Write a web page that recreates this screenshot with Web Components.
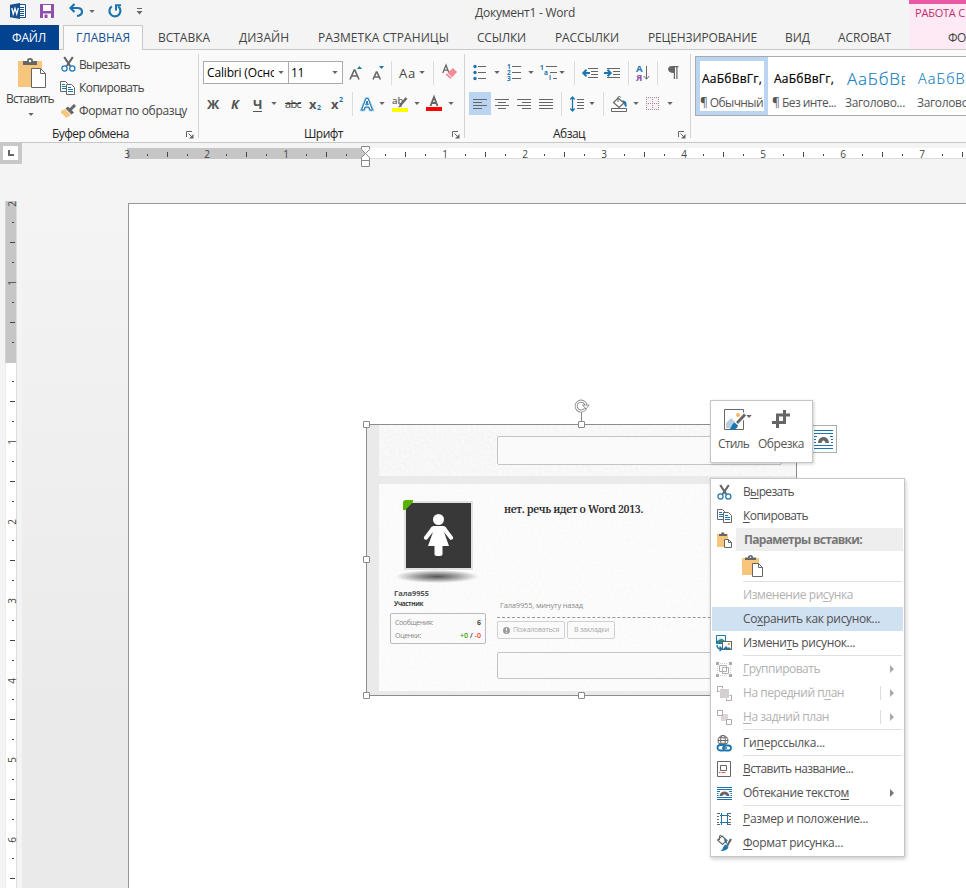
<!DOCTYPE html>
<html lang="ru">
<head>
<meta charset="utf-8">
<title>Документ1 - Word</title>
<style>
html,body{margin:0;padding:0}
body{width:966px;height:888px;overflow:hidden;font:12px/16px "Open Sans","Noto Sans",sans-serif;color:#444;background:#f4f4f4}
</style>
</head>
<body>
<word-window></word-window>
<script>
const define = (name, html, init) => customElements.define(name, class extends HTMLElement {
  constructor() {
    super();
    const t = document.createElement('template');
    t.innerHTML = html;
    this.attachShadow({mode: 'open'}).append(t.content.cloneNode(true));
  }
  connectedCallback() { if (init) init.call(this, this.shadowRoot); }
});

const G = '#666', B = '#1b75ae';
const lines = (x, ws, y, s, c = G) => ws.map((w, i) => `<path d="M${x[i] ?? x[0]} ${y + i * s}h${w}" stroke="${c}"/>`).join('');
const picMini = (x, y) => `<rect x="${x}.5" y="${y}.5" width="9" height="8" fill="#fff" stroke="${G}"/><path d="M${x+1} ${y+8}l3-3 2 2 1-1 2 2z" fill="${B}"/><rect x="${x+6}" y="${y+2}" width="2" height="2" fill="#f0a848"/>`;
const ICONS = {
  word: [16,16,`<path d="M9 1.500h6.500v13H9" fill="#fff" stroke="#17508f"/><path d="M10 4.500h4M10 6.500h4M10 8.500h4M10 10.500h4M10 12.500h4" stroke="#17508f"/><path d="M0 1.800L10 0v16L0 14.200z" fill="#17508f"/><path d="M1.800 5l1.400 6L5 5.400 6.700 11 8.300 5" fill="none" stroke="#fff" stroke-width="1.300"/>`],
  save: [14,14,`<path d="M0 0h14v14H0z" fill="#8f4fae"/><path d="M3 1h8v6H3z" fill="#fff"/><path d="M3 9.500h8V14H3z" fill="#fff"/><path d="M4.500 10.500h3V14h-3z" fill="#8f4fae"/>`],
  undo: [15,13,`<path d="M2 4h6.500c3 0 4.500 1.500 4.500 3.700S11.300 11.500 8 12" fill="none" stroke="${B}" stroke-width="2.200"/><path d="M5.500 0L1.500 4l4 4" fill="none" stroke="${B}" stroke-width="2.200"/>`],
  redo: [14,14,`<path d="M3.800 2.300A5.500 5.500 0 1 0 10.300 2.500" fill="none" stroke="${B}" stroke-width="2.200"/><path d="M8 6.500V1.200h5" fill="none" stroke="${B}" stroke-width="2"/>`],
  qat: [7,7,`<path d="M1 .5h5" stroke="${G}"/><path d="M.5 3h6l-3 3.500z" fill="${G}"/>`],
  arr: [6,3,`<path d="M.3 0h5.400L3 3z" fill="${G}"/>`],
  right: [4,8,`<path d="M0 0v8l4-4z" fill="currentColor"/>`],
  launch: [8,8,`<path d="M.5 6V.5H6" fill="none" stroke="${G}"/><path d="M2.500 2.500L6 6" stroke="${G}"/><path d="M7.500 3v4.500H3z" fill="${G}"/>`],
  paste: [28,31,`<path d="M0 3h24v26H0z" fill="#f8c57c"/><path d="M5 7V3h4a3 3 0 0 1 6 0h4v4z" fill="${G}"/><circle cx="12" cy="3" r="1.200" fill="#fff"/><path d="M13.500 10.500h9l5 5v14h-14z" fill="#fff" stroke="${G}"/><path d="M22.500 10.500v5h5" fill="none" stroke="${G}"/>`],
  pasteS: [21,22,`<path d="M0 3h17v17H0z" fill="#f8c57c"/><path d="M3 5V2.500h3a2.500 2.500 0 0 1 5 0h3V5z" fill="${G}"/><circle cx="8.500" cy="2.200" r=".8" fill="#fff"/><path d="M10.500 8.500h6l4 4v9h-10z" fill="#fff" stroke="${G}"/><path d="M16.500 8.500v4h4" fill="none" stroke="${G}"/>`],
  pasteXS: [15,16,`<path d="M0 2h11v13H0z" fill="#f8c57c"/><path d="M2 4V2h2a1.500 1.500 0 0 1 3.500 0H10v2z" fill="${G}"/><path d="M7.500 7.500h4l3 3v5h-7z" fill="#fff" stroke="${G}"/><path d="M11.500 7.500v3h3" fill="none" stroke="${G}"/>`],
  cut: [15,15,`<path d="M3.200 0l6 9M11.800 0L5.800 9" stroke="${G}" stroke-width="2.200"/><circle cx="3.500" cy="11.500" r="2.600" fill="none" stroke="${B}" stroke-width="1.200"/><circle cx="11.300" cy="11.500" r="2.600" fill="none" stroke="${B}" stroke-width="1.200"/>`],
  copy: [15,14,`<path d="M.5.5h5l2 2v8H.5z" fill="#fff" stroke="${G}"/><path d="M2 3.500h3M2 5.500h4M2 7.500h4" stroke="${B}"/><path d="M6.500 3.500h5l3 3v7h-8z" fill="#fff" stroke="${G}"/><path d="M8 6.500h3M8 8.500h5M8 10.500h5" stroke="${B}"/>`],
  brush: [15,14,`<path d="M0 7l4-2 6 6-5 3c-1-2-3-4-5-5z" fill="#f8c57c"/><path d="M4.500 4.500L7 2.500l6 6-2.500 2z" fill="${G}"/><path d="M9.500 5.500L14 1" stroke="${G}" stroke-width="3"/>`],
  growA: [15,14,`<path d="M1 13.500L5.200 4h.6L10 13.500M2.800 10h5.400" fill="none" stroke="${G}" stroke-width="1.600"/><path d="M8 3l2.500-3L13 3z" fill="${B}"/>`],
  shrinkA: [15,14,`<path d="M1 13.500L4.400 6h.5l3.500 7.500M2.300 11h4.600" fill="none" stroke="${G}" stroke-width="1.600"/><path d="M7 0h5L9.500 3z" fill="${B}"/>`],
  eraser: [16,15,`<path d="M.8 8L4 0l3 8M2 5.200h4" fill="none" stroke="${G}" stroke-width="1.300"/><path d="M11 3l4 4-6.500 7-5-4.500z" fill="#f58a97"/><path d="M5 8l5 4.500" stroke="#fff" />`],
  effA: [14,14,`<path d="M1.500 13L6 1.500h2L12.500 13H10L9 10H5l-1 3zM5.700 7.800h2.600L7 4z" fill="#fff" stroke="#8fc4ea" stroke-width="2.600"/><path d="M1.500 13L6 1.500h2L12.500 13H10L9 10H5l-1 3zM5.700 7.800h2.600L7 4z" fill="#fff" stroke="${B}"/>`],
  high: [17,16,`<path d="M0 12h16v4H0z" fill="#ff0"/><text x="0" y="7.500" font-size="9.500" font-weight="600" fill="${G}">ab</text><path d="M14.500 2L8 9.500" stroke="${G}" stroke-width="2.500"/><path d="M8.500 8L6 11.500l4-1z" fill="${G}"/>`],
  colA: [16,15,`<path d="M0 11h16v4H0z" fill="#f00"/><path d="M4.500 10L8 1l3.500 9M5.700 7h4.600" fill="none" stroke="${G}" stroke-width="1.900"/>`],
  bul: [14,16,[2,8,14].map(y=>`<circle cx="2" cy="${y-.5}" r="1.700" fill="${B}"/><path d="M5 ${y-.5}h8" stroke="${G}"/>`).join('')],
  num: [15,17,[2,8,14].map((y,i)=>`<text x="0" y="${y+3}" font-size="6.500" font-weight="700" fill="${B}">${i+1}</text><path d="M5 ${y+.5}h9" stroke="${G}"/>`).join('')],
  multi: [18,17,`<text x="0" y="5.500" font-size="6.500" font-weight="700" fill="${B}">1</text><text x="4" y="10.500" font-size="6.500" font-weight="700" fill="${B}">a</text><text x="9" y="16" font-size="6.500" font-weight="700" fill="${B}">i</text><path d="M6 2.500h11M10 8.500h7M13 14.500h4" stroke="${G}"/>`],
  outd: [16,12,`<path d="M6 1.500h10M9 4.500h7M9 7.500h7M6 10.500h10" stroke="${G}"/><path d="M8 6H2M4.500 2.800L1.300 6l3.200 3.200" fill="none" stroke="${B}" stroke-width="2"/>`],
  ind: [16,12,`<path d="M3 1.500h13M9 4.500h7M9 7.500h7M3 10.500h13" stroke="${G}"/><path d="M0 6h6M3.500 2.800L6.700 6 3.500 9.200" fill="none" stroke="${B}" stroke-width="2"/>`],
  sort: [15,16,`<text x="0" y="7" font-size="9.500" font-weight="700" fill="${B}">А</text><text x="0" y="15.500" font-size="9.500" font-weight="700" fill="#8f4fae">Я</text><path d="M10.500 1v13M7.700 11l2.800 3.200 2.800-3.200" fill="none" stroke="${G}"/>`],
  pil: [12,13,`<path d="M4 0h6.500v1.200H9.500V13H8.300V1.200H7V13H5.800V7C-1.500 7-1.500 0 4 0z" fill="${G}"/>`],
  al: [14,10,lines([0],[14,9,14,9],.5,3)], ac: [14,10,lines([0,3,0,3],[14,8,14,8],.5,3)],
  ar: [14,10,lines([0,5,0,5],[14,9,14,9],.5,3)], aj: [14,10,lines([0],[14,14,14,14],.5,3)],
  space: [15,16,`<path d="M2.500 1v14M.3 3.500L2.500 1l2.200 2.500M.3 12.500L2.500 15l2.200-2.500" fill="none" stroke="${B}" stroke-width="1.300"/>`+lines([7],[7,7,7,7],3.500,3)],
  fill: [17,16,`<path d="M.5 12.500h15v3H.5z" fill="#fff" stroke="${G}"/><path d="M7 2l6 5-5 4.500-5.500-5z" fill="#fff" stroke="${G}" stroke-width="1.200"/><path d="M7 6V1.500c0-1.500 2.500-1.500 2.500 0" fill="none" stroke="${G}"/><path d="M11 4.500c4 0 5 2 4.500 6.500C14 11 13 9 13 7z" fill="${B}"/>`],
  bord: [13,13,`<path d="M0 0h13v13H0z" fill="#f8f1f6"/><path d="M0 .5h13M0 6.500h13M0 12.500h13M.5 0v13M6.500 0v13M12.500 0v13" fill="none" stroke="#a58c9b" stroke-dasharray="1 1"/>`],
  style: [22,22,`<path d="M.5.5h19v20H.5z" fill="#fff" stroke="${G}"/><path d="M2 19v-5l5-5 5 5v5z" fill="#b8cede"/><circle cx="14" cy="6" r="2" fill="#f3b95f"/><path d="M21.500 5L12 16" stroke="#fff" stroke-width="5"/><path d="M21 5.500L13 14" stroke="${G}" stroke-width="2.800"/><path d="M10.500 13.500l3.500 3c-1 4-5 5-9.500 4.500 3-1.500 3-6 6-7.500z" fill="${B}"/>`],
  crop: [18,18,`<path d="M12.500 0v12.500H7M5.500 18V5H12M0 12.500h13M18 5H5" fill="none" stroke="${G}" stroke-width="3"/>`],
  wrap: [19,19,`<path d="M0 .5h19M0 3.500h19M0 15.500h19M0 18.500h19" stroke="${B}"/><path d="M0 6.500h3M0 9.500h2M0 12.500h2M16 6.500h3M17 9.500h2M17 12.500h2" stroke="${B}"/><path d="M4 13c.5-8 10.500-8 11 0h-3.500c-.5-3.500-3.500-3.500-4 0z" fill="${G}"/>`],
  wrapS: [15,13,`<path d="M0 .5h15M0 2.500h15M0 10.500h15M0 12.500h15" stroke="${B}"/><path d="M0 4.500h3M12 4.500h3M0 6.500h1.500M13.500 6.500H15M0 8.500h1.500M13.500 8.500H15" stroke="${B}"/><path d="M2.500 9c.5-6 9.500-6 10 0H9.500c-.5-2-3.500-2-4 0z" fill="${G}"/>`],
  change: [16,16,`<path d="M.5.500h9v8h-9z" fill="#fff" stroke="${B}"/><path d="M1 8V5l3-3 5 4v2z" fill="#2f887d"/><path d="M1 1h8v2L5 4 1 6z" fill="#fff" opacity=".8"/>${picMini(6,6)}<path d="M1 10c0 3 1.500 4 4 4M3.500 11.500L6 14l-2.500 2" fill="none" stroke="${B}" stroke-width="1.500"/>`],
  group: [16,15,`<path d="M3.500 3.500h7v6h-7zM6.500 5.500h6v6h-6z" fill="none" stroke="#b3abb0"/><path d="M1.500 4v7M14.500 4v7M4 1.500h8M4 13.500h8" stroke="#ccc" stroke-dasharray="1 1"/><path d="M0 0h3v3H0zM13 0h3v3h-3zM0 12h3v3H0zM13 12h3v3h-3z" fill="#aaa"/>`],
  front: [15,15,`<path d="M.5 6V.5H6M14.500 9v5.500H9" fill="none" stroke="#b3abb0"/><path d="M3 3h9v9H3z" fill="#d5ced3"/><path d="M.5 5.500h2M5.500 .5v2M9.500 12.500v2M12.500 9.500h2" stroke="#b3abb0"/>`],
  back: [15,15,`<path d="M4 4h7v7H4z" fill="#ddd6db"/><path d="M.5.5h5v5h-5zM9.500 9.500h5v5h-5z" fill="#fff" stroke="#aaa"/>`],
  link: [16,17,`<circle cx="7" cy="5.500" r="5" fill="#fff" stroke="${G}"/><path d="M2 5.500h10M3 2.800h8M3 8.300h8" stroke="${G}" fill="none"/><ellipse cx="7" cy="5.500" rx="2.300" ry="5" fill="none" stroke="${G}"/><rect x="1.500" y="10" width="8" height="5.500" rx="2.700" fill="#fff" stroke="${B}" stroke-width="1.800"/><rect x="7.500" y="10.500" width="7.500" height="5" rx="2.500" fill="#fff" stroke="${B}" stroke-width="1.800"/><path d="M6 13h5" stroke="${B}" stroke-width="1.500"/>`],
  cap: [14,16,`<path d="M.5.5h13v15H.5z" fill="#fff" stroke="${G}"/><path d="M3.500 4.500h6v5h-6z" fill="none" stroke="${G}"/><path d="M2 11.500h1.500M4.500 11.500h4" stroke="#e0533c"/>`],
  size: [14,12,`<path d="M0 .5h3M0 3.500h2M0 6.500h2M0 9.500h2M11 .5h3M12 3.500h2M12 6.500h2M12 9.500h2M0 11.500h3M11 11.500h3" stroke="${G}"/><path d="M4.500 0v12M10.500 0v12M3 2.500h9M3 9.500h9" fill="none" stroke="${B}"/>`],
  format: [17,16,`<path d="M6 1l5 4.500L6.500 9.500 1.500 5z" fill="#fff" stroke="${G}" stroke-width="1.200"/><path d="M3.500 5V1c0-1 2-1 2 0" fill="none" stroke="${G}"/><path d="M8 4c2 0 3 2 3 5-2-1-2.500-3-3-5z" fill="${B}"/><path d="M15 4l-4 7" stroke="${G}" stroke-width="2.200"/><path d="M9.500 9.500l3 2.500c-1 3-4 4-8 4 3-1.500 2.500-5.500 5-6.500z" fill="${B}"/>`],
  rotate: [16,16,`<path d="M11.500 9.500A5 5 0 1 1 12 6" fill="none" stroke="#888" stroke-width="3"/><path d="M11.500 9.500A5 5 0 1 1 12 6" fill="none" stroke="#fff" stroke-width="1.300"/><path d="M8.500 6h6.500l-3 4z" fill="#fff" stroke="#888" stroke-width=".9"/>`],
  woman: [31,43,`<circle cx="15.500" cy="5.500" r="5.500" fill="#fff"/><path d="M11 12h9c2 0 3 1 4 3l6 8c1 2-2 4-3.500 2L21 18l5 14h-6.500v8.500c0 2-8 2-8 0V32H5l5-14-5.500 7C3 27 0 25 1 23l6-8c1-2 2-3 4-3z" fill="#fff"/>`],
  info: [7,7,`<circle cx="3.500" cy="3.500" r="3.500" fill="#999"/><path d="M3.500 1.300v2.500M3.500 4.700v1" stroke="#fff" stroke-width="1.200"/>`]
};

define('ui-icon', `<style>:host{display:block;flex:none}svg{display:block;overflow:visible;font-family:"Open Sans",sans-serif}</style><span></span>`, function(r) {
  const [w, h, b] = ICONS[this.getAttribute('name')];
  r.querySelector('span').innerHTML = `<svg width="${w}" height="${h}" viewBox="0 0 ${w} ${h}">${b}</svg>`;
});

/* Label whose letter spacing is adjusted so that its text spans the width in "w". */
define('ui-label', `<style>:host{display:block;flex:none;white-space:nowrap}span{display:inline-block;white-space:nowrap;text-decoration:var(--deco,none);text-underline-offset:2px}</style><span><slot></slot></span>`, function(r) {
  const w = +this.getAttribute('w');
  if (!w) return;
  const s = r.querySelector('span');
  this.style.width = w + 'px';
  s.style.letterSpacing = (w - s.getBoundingClientRect().width) / this.textContent.length + 'px';
});

define('ui-sep', `<style>:host{display:block;flex:none;width:1px;height:24px;background:#dcdcdc}</style>`);

define('title-bar', `<style>
:host{display:flex;height:25px;background:#f4f4f4;align-items:flex-start}
.ctx{margin-left:auto;width:57px;box-sizing:border-box;height:25px;background:#fdeaf4;border-top:4px solid #e85aa3;color:#c0306f;padding:1px 0 0 6px}
</style>
<ui-icon name="word" style="margin:3px 0 0 10px"></ui-icon>
<ui-icon name="save" style="margin:4px 0 0 14px"></ui-icon>
<ui-icon name="undo" style="margin:4px 0 0 15px"></ui-icon>
<ui-icon name="arr" style="margin:10px 0 0 5px"></ui-icon>
<ui-icon name="redo" style="margin:4px 0 0 13px"></ui-icon>
<ui-icon name="qat" style="margin:8px 0 0 14px"></ui-icon>
<ui-label w="100" style="margin:5px 0 0 332px">Документ1 - Word</ui-label>
<div class="ctx"><ui-label w="50" style="font-size:11px">РАБОТА С</ui-label></div>`);

define('tab-strip', `<style>
:host{display:flex;height:25px;background:#f4f4f4;box-shadow:inset 0 -1px #c8c8c8;font-size:12px;line-height:25px}
.file{width:47px;padding-left:12px;background:#01438e;color:#fff}
.on{margin-left:4px;box-sizing:border-box;width:80px;padding-left:12px;background:#fafafa;border:1px solid #c8c8c8;border-bottom:0;color:#17508f;line-height:24px}
.ctx{margin-left:auto;width:57px;box-sizing:border-box;padding-left:39px;background:#fdeaf4;height:24px}
</style>
<div class="file"><ui-label w="34">ФАЙЛ</ui-label></div>
<div class="on"><ui-label w="54">ГЛАВНАЯ</ui-label></div>
<ui-label w="52" style="margin-left:15px">ВСТАВКА</ui-label>
<ui-label w="50" style="margin-left:29px">ДИЗАЙН</ui-label>
<ui-label w="131" style="margin-left:29px">РАЗМЕТКА СТРАНИЦЫ</ui-label>
<ui-label w="49" style="margin-left:28px">ССЫЛКИ</ui-label>
<ui-label w="64" style="margin-left:29px">РАССЫЛКИ</ui-label>
<ui-label w="109" style="margin-left:29px">РЕЦЕНЗИРОВАНИЕ</ui-label>
<ui-label w="25" style="margin-left:28px">ВИД</ui-label>
<ui-label w="53" style="margin-left:28px">ACROBAT</ui-label>
<div class="ctx"><ui-label w="18">ФО</ui-label></div>`);

define('ribbon-group', `<style>
:host{display:flex;flex-direction:column;flex:none;box-sizing:border-box;height:92px}
:host([bar]){background:linear-gradient(#d4d4d4,#d4d4d4) no-repeat right 4px/1px 84px}
.body{height:76px}.cap{height:16px;display:flex;color:#262626}
</style><div class="body"><slot></slot></div><div class="cap"><slot name="cap"></slot></div>`);

define('word-ribbon', `<style>
:host{display:flex;height:92px;background:#fafafa;border-bottom:1px solid #c8c8c8;overflow:hidden}
.r{display:flex;align-items:center}
.combo{display:flex;align-items:center;box-sizing:border-box;height:23px;border:1px solid #ababab;background:#fff;color:#000}
.clip{overflow:hidden}
.big{width:60px;padding-top:8px}
.t{color:#555;font-weight:700;font-size:13px}
.n2{font-size:7px;color:#1b75ae;font-weight:700}
.sel{width:22px;height:23px;background:#bad5f1;display:grid;place-content:center}
.gal{display:flex;width:290px;height:58px;margin:6px 0 0 4px;border:1px solid #ababab;background:#fff}
.c{width:72px;box-sizing:border-box;height:58px;padding:4px 4px 0;color:#000;flex:none}
.c.on{border:4px solid #bad5f1;padding:0}
.s{width:60px;padding:9px 0 0 2px;overflow:hidden;height:25px;line-height:18px;-webkit-text-stroke:.2px}
.s.h{color:#0f7cc0;font-weight:300;-webkit-text-stroke:.15px}
.n{color:#555;overflow:hidden;line-height:16px}
</style>
<ribbon-group bar style="width:199px">
 <div style="display:flex">
  <div class="big"><ui-icon name="paste" style="margin-left:18px"></ui-icon><ui-label w="48" style="margin:2px 0 0 6px">Вставить</ui-label><ui-icon name="arr" style="margin:6px 0 0 28px"></ui-icon></div>
  <div>
   <div class="r" style="height:23px;margin-top:3px"><ui-icon name="cut" style="margin-left:1px"></ui-icon><ui-label w="51" style="margin-left:3px">Вырезать</ui-label></div>
   <div class="r" style="height:23px"><ui-icon name="copy"></ui-icon><ui-label w="65" style="margin-left:4px">Копировать</ui-label></div>
   <div class="r" style="height:23px"><ui-icon name="brush" style="margin-left:1px"></ui-icon><ui-label w="108" style="margin-left:3px">Формат по образцу</ui-label></div>
  </div>
 </div>
 <ui-label slot="cap" w="77" style="margin-left:52px">Буфер обмена</ui-label><ui-icon slot="cap" name="launch" style="margin:5px 0 0 57px"></ui-icon>
</ribbon-group>
<ribbon-group bar style="width:266px">
 <div class="r" style="padding:11px 0 0 4px;height:23px">
  <div class="combo" style="width:86px"><div class="clip" style="width:67px;padding-left:3px"><ui-label w="70">Calibri (Осно</ui-label></div><ui-icon name="arr" style="margin-left:4px"></ui-icon></div>
  <div class="combo" style="width:55px;margin-left:-1px"><ui-label w="13" style="margin-left:2px">11</ui-label><ui-icon name="arr" style="margin-left:28px"></ui-icon></div>
  <ui-icon name="growA" style="margin-left:6px"></ui-icon><ui-icon name="shrinkA" style="margin-left:8px"></ui-icon>
  <ui-sep style="margin-left:4px"></ui-sep><ui-label w="17" style="margin-left:7px;font-size:13px">Aa</ui-label><ui-icon name="arr" style="margin-left:3px"></ui-icon>
  <ui-sep style="margin-left:8px"></ui-sep><ui-icon name="eraser" style="margin-left:8px"></ui-icon>
 </div>
 <div class="r" style="padding:8px 0 0 8px;height:23px">
  <ui-label class="t" w="13">Ж</ui-label><ui-label class="t" w="9" style="margin-left:11px;font-style:italic">К</ui-label><ui-label class="t" w="9" style="margin-left:13px;--deco:underline">Ч</ui-label><ui-icon name="arr" style="margin-left:9px"></ui-icon>
  <ui-label w="16" style="margin-left:8px;font-size:11px;--deco:line-through">abc</ui-label>
  <ui-label class="t" w="8" style="margin-left:8px">x</ui-label><span class="n2" style="padding-top:9px">2</span>
  <ui-label class="t" w="8" style="margin-left:10px">x</ui-label><span class="n2" style="padding-bottom:8px">2</span>
  <ui-sep style="margin-left:9px"></ui-sep><ui-icon name="effA" style="margin-left:7px"></ui-icon><ui-icon name="arr" style="margin-left:5px"></ui-icon>
  <ui-icon name="high" style="margin-left:7px"></ui-icon><ui-icon name="arr" style="margin-left:5px"></ui-icon>
  <ui-icon name="colA" style="margin-left:6px"></ui-icon><ui-icon name="arr" style="margin-left:6px"></ui-icon>
 </div>
 <ui-label slot="cap" w="39" style="margin-left:105px">Шрифт</ui-label><ui-icon slot="cap" name="launch" style="margin:5px 0 0 109px"></ui-icon>
</ribbon-group>
<ribbon-group bar style="width:226px">
 <div class="r" style="padding:11px 0 0 8px;height:23px">
  <ui-icon name="bul"></ui-icon><ui-icon name="arr" style="margin-left:7px"></ui-icon>
  <ui-icon name="num" style="margin-left:7px"></ui-icon><ui-icon name="arr" style="margin-left:6px"></ui-icon>
  <ui-icon name="multi" style="margin-left:6px"></ui-icon><ui-icon name="arr" style="margin-left:1px"></ui-icon>
  <ui-sep style="margin-left:9px"></ui-sep><ui-icon name="outd" style="margin-left:7px"></ui-icon><ui-icon name="ind" style="margin-left:6px"></ui-icon>
  <ui-sep style="margin-left:8px"></ui-sep><ui-icon name="sort" style="margin-left:7px"></ui-icon>
  <ui-sep style="margin-left:6px"></ui-sep><ui-icon name="pil" style="margin-left:10px"></ui-icon>
 </div>
 <div class="r" style="padding:8px 0 0 4px;height:23px">
  <div class="sel"><ui-icon name="al"></ui-icon></div><ui-icon name="ac" style="margin-left:4px"></ui-icon><ui-icon name="ar" style="margin-left:8px"></ui-icon><ui-icon name="aj" style="margin-left:8px"></ui-icon>
  <ui-sep style="margin-left:8px"></ui-sep><ui-icon name="space" style="margin-left:8px"></ui-icon><ui-icon name="arr" style="margin-left:4px"></ui-icon>
  <ui-sep style="margin-left:8px"></ui-sep><ui-icon name="fill" style="margin-left:7px"></ui-icon><ui-icon name="arr" style="margin-left:5px"></ui-icon>
  <ui-icon name="bord" style="margin-left:7px"></ui-icon><ui-icon name="arr" style="margin-left:8px"></ui-icon>
 </div>
 <ui-label slot="cap" w="32" style="margin-left:88px">Абзац</ui-label><ui-icon slot="cap" name="launch" style="margin:5px 0 0 93px"></ui-icon>
</ribbon-group>
<div class="gal">
 <div class="c on"><div class="s"><ui-label w="60">АаБбВвГг,</ui-label></div><div class="n"><ui-label w="63">¶ Обычный</ui-label></div></div>
 <div class="c"><div class="s"><ui-label w="60">АаБбВвГг,</ui-label></div><div class="n"><ui-label w="64">¶ Без инте...</ui-label></div></div>
 <div class="c"><div class="s h" style="font-size:17px;width:58px;padding-left:3px"><ui-label w="64">АаБбВв</ui-label></div><div class="n" style="padding-left:1px"><ui-label w="60">Заголово...</ui-label></div></div>
 <div class="c"><div class="s h" style="font-size:14.5px;padding-left:2px"><ui-label w="57">АаБбВв</ui-label></div><div class="n" style="padding-left:1px"><ui-label w="60">Заголово...</ui-label></div></div>
</div>`);

define('word-ruler', `<style>:host{display:block;flex:none}svg{display:block;font:10px "Open Sans",sans-serif;fill:#444}</style><div></div>`, function(r) {
  const v = this.hasAttribute('vertical'), len = v ? 690 : 840;
  const zero = v ? 161.5 : 238.5, lo = v ? -2 : -3, hi = v ? 7 : 8, step = 79.5;
  let s = '';
  for (let q = lo * 4; q <= hi * 4; q++) {
    const p = Math.round(zero + q * step / 4);
    if (q === 0 || p > len) continue;
    if (q % 4 === 0) s += v ? `<text transform="translate(10.500 ${p}) rotate(-90)" text-anchor="middle">${Math.abs(q / 4)}</text>` : `<text x="${p}" y="9.500" text-anchor="middle">${Math.abs(q / 4)}</text>`;
    else {
      const d = q % 2 === 0 ? 5 : 2, o = q % 2 === 0 ? 4 : 6;
      s += v ? `<rect x="${o + 1}" y="${p - 1}" width="${d}" height="1"/>` : `<rect x="${p}" y="${o}" width="1" height="${d}"/>`;
    }
  }
  r.querySelector('div').innerHTML = v
    ? `<svg width="12" height="${len}"><rect width="12" height="${len}" fill="#fff"/><rect width="12" height="162" fill="#c6c6c6"/><path d="M0 0v${len}M11.500 0v${len}" stroke="#ddd"/>${s}</svg>`
    : `<svg width="${len}" height="20" style="overflow:visible"><rect width="${len}" height="11" fill="#fff"/><rect width="239" height="11" fill="#c6c6c6"/><path d="M239 10.500h601" stroke="#ddd"/>${s}
       <path d="M234.500-1.500h8v3l-4 4 4 4v3h-8v-3l4-4-4-4zM234.500 12.500h8v6h-8z" fill="#fff" stroke="#888"/></svg>`;
});

define('forum-shot', `<style>
:host{display:block;box-sizing:border-box;width:431px;height:272px;border:1px solid #8c8c8c;background:#eaeaea;overflow:hidden;padding-left:12px;font-family:"Open Sans",sans-serif;font-size:8px;line-height:10px}
.p{position:relative;background:#f9f9f9}
.tex{position:absolute;inset:0;width:100%;height:100%;opacity:.4}
.in{position:relative}
.box{box-sizing:border-box;width:285px;border:1px solid #c4c4c4;border-radius:2px;background:#fafafa}
.post{display:grid;grid-template-columns:118px 1fr}
.av{width:65px;height:65px;border:2px solid #e2e2e2;background:#383838;margin:17px 0 0 25px;display:grid;place-content:center;position:relative}
.av::before{content:"";position:absolute;left:-3px;top:-3px;width:10px;height:10px;border-radius:3px 0 0 0;background:#57b300;clip-path:polygon(0 0,100% 0,100% 20%,25% 100%,0 100%)}
.sh{width:84px;height:13px;margin:0 0 0 16px;background:radial-gradient(closest-side,#555,#999 45%,transparent)}
.st{box-sizing:border-box;width:96px;height:31px;border:1px solid #bbb;border-radius:2px;background:#fafafa;margin:4px 0 0 11px;padding:4px 4px 0;font-size:7px;color:#888}
.l{display:flex;justify-content:space-between;height:13px}
.b{box-sizing:border-box;height:18px;border:1px solid #d0d0d0;border-radius:2px;display:flex;align-items:center;color:#aaa;font-size:7px;background:#fafafa}
</style>
<div class="p" style="height:51px"><svg class="tex"><filter id="n"><feTurbulence type="fractalNoise" baseFrequency=".35" numOctaves="2"/><feColorMatrix values="0 0 0 0 .5 0 0 0 0 .5 0 0 0 0 .5 .5 0 0 0 -.18"/></filter><rect width="100%" height="100%" filter="url(#n)"/></svg>
<div class="in" style="padding:11px 0 0 118px"><div class="box" style="height:29px"></div></div></div>
<div class="p" style="height:207px;margin-top:8px;background:#fcfcfc"><svg class="tex" style="opacity:.22"><filter id="n2"><feTurbulence type="fractalNoise" baseFrequency=".35" numOctaves="2"/><feColorMatrix values="0 0 0 0 .5 0 0 0 0 .5 0 0 0 0 .5 .5 0 0 0 -.18"/></filter><rect width="100%" height="100%" filter="url(#n2)"/></svg>
<div class="in post">
 <div><div class="av"><ui-icon name="woman"></ui-icon></div><div class="sh"></div>
  <ui-label w="35" style="font-weight:700;font-size:7.500px;margin:5px 0 0 15px;color:#555">Гала9955</ui-label>
  <ui-label w="29" style="font-weight:700;font-size:6.500px;margin:1px 0 0 15px;color:#444">Участник</ui-label>
  <div class="st"><div class="l"><ui-label w="38">Сообщения:</ui-label><b style="color:#444">6</b></div><div class="l"><ui-label w="26">Оценки:</ui-label><ui-label w="21" style="font-weight:600"><span style="color:#3ba000">+0</span><span style="color:#333"> / </span><span style="color:#f33">-0</span></ui-label></div></div>
 </div>
 <div>
  <ui-label w="139" style="font:600 10.500px/16px 'Noto Serif','DejaVu Serif',serif;font-stretch:condensed;color:#2b2b2b;margin:17px 0 0 7px">нет. речь идет о Word 2013.</ui-label>
  <ui-label w="83" style="font-size:7.500px;color:#8a8a8a;margin:83px 0 0 3px">Гала9955, минуту назад</ui-label>
  <div style="border-top:1px dashed #999;margin-top:7px"></div>
  <div style="display:flex;gap:2px;margin-top:3px"><div class="b" style="width:68px;padding-left:5px"><ui-icon name="info"></ui-icon><ui-label w="46" style="margin-left:3px">Пожаловаться</ui-label></div><div class="b" style="width:48px;padding-left:6px"><ui-label w="35">В закладки</ui-label></div></div>
  <div class="box" style="height:27px;margin-top:13px"></div>
 </div>
</div></div>`);

define('picture-frame', `<style>
:host{position:absolute;left:366px;top:424px;width:431px;height:272px}
i{position:absolute;width:5px;height:5px;border:1px solid #888;background:#fff;border-radius:1px}
.stem{position:absolute;left:215px;top:-12px;width:1px;height:12px;background:#888}
.rot{position:absolute;left:208px;top:-25px}
</style><slot></slot><div class="stem"></div><ui-icon class="rot" name="rotate"></ui-icon>
<i style="left:-3px;top:-3px"></i><i style="left:212px;top:-3px"></i><i style="left:-3px;top:132px"></i><i style="left:-3px;top:268px"></i><i style="left:212px;top:268px"></i>`);

define('mini-toolbar', `<style>
:host{position:absolute;left:710px;top:400px;box-sizing:border-box;width:103px;height:63px;background:#fff;border:1px solid #c6c6c6;box-shadow:1px 1px 3px #0003;display:flex;z-index:2;color:#555}
</style>
<div style="width:46px"><div style="display:flex;align-items:center"><ui-icon name="style" style="margin:8px 0 0 13px"></ui-icon><ui-icon name="arr"></ui-icon></div><ui-label w="31" style="margin:5px 0 0 7px">Стиль</ui-label></div>
<div><ui-icon name="crop" style="margin:9px 0 0 15px"></ui-icon><ui-label w="46" style="margin:8px 0 0 1px">Обрезка</ui-label></div>`);

define('layout-button', `<style>:host{position:absolute;left:807px;top:425px;width:28px;height:26px;background:#fff;border:1px solid #ababab;z-index:1}</style><ui-icon name="wrap" style="margin:4px 0 0 6px"></ui-icon>`);

define('menu-item', `<style>
:host{display:flex;height:24px;align-items:center;color:#505050}
:host([off]){color:#b1b1b1}
:host([hl]){background:#d0e1f2}
.i{width:24px;display:grid;place-content:center;flex:none;margin-right:7px}
.e{margin-left:auto;width:22px;height:14px;display:flex;align-items:center;padding-left:9px;box-sizing:border-box;color:#777}
:host([off]) .e{color:#aaa}
:host([split]) .e{box-shadow:-1px 0 #ddd}
</style><div class="i"></div><slot></slot><div class="e"></div>`, function(r) {
  const n = this.getAttribute('icon');
  if (n) r.querySelector('.i').innerHTML = `<ui-icon name="${n}"></ui-icon>`;
  if (this.hasAttribute('sub')) r.querySelector('.e').innerHTML = `<ui-icon name="right"></ui-icon>`;
});
define('menu-line', `<style>:host{display:block;height:1px;margin:0 1px 1px 31px;background:#e0e0e0}</style>`);
define('context-menu', `<style>
:host{position:absolute;left:710px;top:478px;width:191px;box-sizing:content-box;padding:1px;border:1px solid #c6c6c6;background:#fff;box-shadow:1px 2px 4px #0003;z-index:2}
.h{display:flex;height:24px}.h .x{width:24px;display:grid;place-content:center}
.h .y{flex:1;height:23px;background:#eee;padding:4px 0 0 8px;box-sizing:border-box;font-weight:700;color:#777}
u{text-underline-offset:2px}
</style>
<menu-item icon="cut"><ui-label w="51">В<u>ы</u>резать</ui-label></menu-item>
<menu-item icon="copy"><ui-label w="65"><u>К</u>опировать</ui-label></menu-item>
<div class="h"><div class="x"><ui-icon name="pasteXS"></ui-icon></div><div class="y"><ui-label w="118">Параметры вставки:</ui-label></div></div>
<div style="height:29px;padding:3px 0 0 30px;box-sizing:border-box"><ui-icon name="pasteS"></ui-icon></div>
<menu-line></menu-line>
<menu-item off><ui-label w="110">Изменение ри<u>с</u>унка</ui-label></menu-item>
<menu-item hl><ui-label w="137">Со<u>х</u>ранить как рисунок...</ui-label></menu-item>
<menu-item icon="change"><ui-label w="112">Измени<u>т</u>ь рисунок...</ui-label></menu-item>
<menu-line></menu-line>
<menu-item icon="group" off sub><ui-label w="77"><u>Г</u>руппировать</ui-label></menu-item>
<menu-item icon="front" off sub split><ui-label w="101">На передний п<u>л</u>ан</ui-label></menu-item>
<menu-item icon="back" off sub split><ui-label w="86"><u>Н</u>а задний план</ui-label></menu-item>
<menu-line></menu-line>
<menu-item icon="link"><ui-label w="82">Ги<u>п</u>ерссылка...</ui-label></menu-item>
<menu-line></menu-line>
<menu-item icon="cap"><ui-label w="110"><u>В</u>ставить название...</ui-label></menu-item>
<menu-item icon="wrapS" sub><ui-label w="106">Обтекание тексто<u>м</u></ui-label></menu-item>
<menu-line></menu-line>
<menu-item icon="size"><ui-label w="125"><u>Р</u>азмер и положение...</ui-label></menu-item>
<menu-item icon="format"><ui-label w="100"><u>Ф</u>ормат рисунка...</ui-label></menu-item>`);

define('word-window', `<style>
:host{display:flex;flex-direction:column;width:966px;height:888px;overflow:hidden;position:relative;background:#f4f4f4}
.top{display:flex;height:61px;flex:none}
.corner{flex:none;width:15px;height:14px;border:4px solid #c8c8c8;border-left-width:3px;border-top-width:3px;background:#fff;display:grid;place-content:center}
.corner i{width:4px;height:4px;border:solid #666;border-width:0 0 2px 2px}
.work{flex:1;display:flex;min-height:0}
.desk{flex:1;margin-left:5px;background:linear-gradient(#f4f4f4,#eaeaea 75%);padding:0 0 0 106px;display:flex}
.page{flex:1;margin-top:-1px;border:solid #979797;border-width:1px 0 0 1px;background:#fff}
</style>
<title-bar></title-bar><tab-strip></tab-strip><word-ribbon></word-ribbon>
<div class="top"><div class="corner"><i></i></div><word-ruler style="margin:5px 0 0 105px"></word-ruler></div>
<div class="work"><word-ruler vertical style="margin:-3px 0 0 5px"></word-ruler><div class="desk"><div class="page"></div></div></div>
<picture-frame><forum-shot></forum-shot></picture-frame>
<mini-toolbar></mini-toolbar><layout-button></layout-button>
<context-menu></context-menu>`);
</script>
</body>
</html>
